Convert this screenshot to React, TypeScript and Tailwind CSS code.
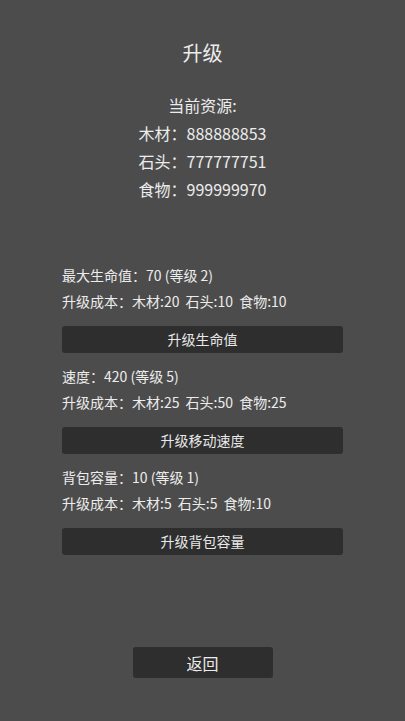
import React from "react";

const font = { fontFamily: '"Noto Sans CJK SC", "Noto Sans", sans-serif' };

function Stat({ title, cost, button }: { title: string; cost: string; button: string }) {
  return (
    <div className="flex flex-col">
      <div className="text-[14px] leading-[26px]">{title}</div>
      <div className="text-[14px] leading-[26px] [word-spacing:3px]">{cost}</div>
      <button className="mt-[12px] h-[27px] w-full rounded-[3px] bg-[#2e2e2e] text-[14px] text-[#e8e8e8]">
        {button}
      </button>
    </div>
  );
}

export default function App() {
  return (
    <div
      className="flex min-h-screen flex-col bg-[#4c4c4c] text-[#ececec]"
      style={font}
    >
      <div className="mt-[38px] text-center text-[20px] leading-[30px]">升级</div>
      <div className="mt-[23px] flex flex-col items-center text-[16px] leading-[28px]">
        <div>当前资源:</div>
        <div>木材：888888853</div>
        <div>石头：777777751</div>
        <div>食物：999999970</div>
      </div>
      <div className="mt-[59px] flex flex-col gap-[10px] px-[62px]">
        <Stat title="最大生命值：70 (等级 2)" cost="升级成本：木材:20 石头:10 食物:10" button="升级生命值" />
        <Stat title="速度：420 (等级 5)" cost="升级成本：木材:25 石头:50 食物:25" button="升级移动速度" />
        <Stat title="背包容量：10 (等级 1)" cost="升级成本：木材:5 石头:5 食物:10" button="升级背包容量" />
      </div>
      <div className="mt-auto flex justify-center pb-[43px]">
        <button className="h-[31px] w-[140px] rounded-[3px] bg-[#2e2e2e] text-[16px] text-[#ececec]">
          返回
        </button>
      </div>
    </div>
  );
}
